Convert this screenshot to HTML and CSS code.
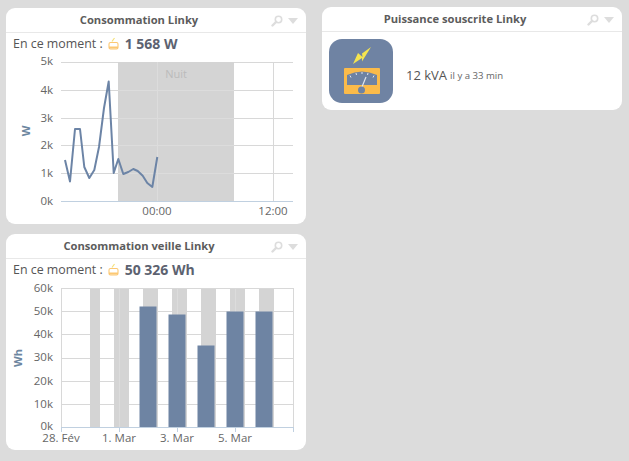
FILE: index.html
```html
<!DOCTYPE html>
<html lang="en">
<head>
  <meta charset="UTF-8" />
  <title>Linky</title>
  <link rel="stylesheet" href="styles.css">
</head>
<body>
  <div class="board">
    <div class="column column-left">
      <div class="card">
        <div class="card-head">
          <span class="card-title">Consommation Linky</span>
          <span class="card-tools">
            <svg width="12" height="12" viewBox="0 0 12 12"><circle cx="7.5" cy="4.5" r="3.2" fill="none" stroke="#ddd" stroke-width="1.6"/><path d="M5 7L1.5 10.5" stroke="#ddd" stroke-width="2.4" stroke-linecap="round"/></svg>
            <span class="caret"></span>
          </span>
        </div>
        <div class="now">
          <span>En ce moment :</span>
          <svg class="plug" width="11" height="13" viewBox="0 0 11 13"><path d="M6.5 1L4 4.5" stroke="#f6e27a" stroke-width="1.2"/><rect x="1" y="5.5" width="9" height="6.5" rx="1.5" fill="#fff" stroke="#fcc873" stroke-width="1.1"/><path d="M1 10.5h9" stroke="#fcc873" stroke-width="2"/></svg>
          <b>1 568 W</b>
        </div>
        <svg class="chart" width="300" height="170" viewBox="6 54 300 170">
          <g class="grid">
            <path d="M61 62.5H293M61 90.5H293M61 118.5H293M61 145.5H293M61 173.5H293"/>
            <path d="M157.5 62V201M273.5 62V201"/>
          </g>
          <rect class="band" x="118" y="62" width="116" height="139"/>
          <g class="grid-soft">
            <path d="M118 90.5H234M118 118.5H234M118 145.5H234M118 173.5H234M157.5 62V201"/>
          </g>
          <path class="axis" d="M61 201.5H293"/>
          <text class="band-label" x="176" y="78" text-anchor="middle">Nuit</text>
          <polyline class="line" points="65,160 70,181.5 75,129 80,129 84.3,167 89.3,178 94.3,170 99,147 104,108 108.7,81.5 113.7,173 118.3,159 123.3,174 128.3,172 133.3,169 137.7,171 142.7,175.7 147.3,183 152.3,187 157.3,157"/>
          <g class="ticks" text-anchor="end">
            <text x="53" y="65">5k</text>
            <text x="53" y="94">4k</text>
            <text x="53" y="122">3k</text>
            <text x="53" y="149">2k</text>
            <text x="53" y="177">1k</text>
            <text x="53" y="205">0k</text>
          </g>
          <g class="ticks" text-anchor="middle">
            <text x="157" y="215">00:00</text>
            <text x="273" y="215">12:00</text>
          </g>
          <text class="axis-title" transform="translate(29.5 131) rotate(-90)" text-anchor="middle">W</text>
        </svg>
      </div>

      <div class="card">
        <div class="card-head">
          <span class="card-title">Consommation veille Linky</span>
          <span class="card-tools">
            <svg width="12" height="12" viewBox="0 0 12 12"><circle cx="7.5" cy="4.5" r="3.2" fill="none" stroke="#ddd" stroke-width="1.6"/><path d="M5 7L1.5 10.5" stroke="#ddd" stroke-width="2.4" stroke-linecap="round"/></svg>
            <span class="caret"></span>
          </span>
        </div>
        <div class="now">
          <span>En ce moment :</span>
          <svg class="plug" width="11" height="13" viewBox="0 0 11 13"><path d="M6.5 1L4 4.5" stroke="#f6e27a" stroke-width="1.2"/><rect x="1" y="5.5" width="9" height="6.5" rx="1.5" fill="#fff" stroke="#fcc873" stroke-width="1.1"/><path d="M1 10.5h9" stroke="#fcc873" stroke-width="2"/></svg>
          <b>50 326 Wh</b>
        </div>
        <svg class="chart" width="300" height="170" viewBox="6 280 300 170">
          <g class="grid">
            <path d="M61 288.5H293M61 311.5H293M61 334.5H293M61 358.5H293M61 381.5H293M61 404.5H293"/>
            <path d="M61.5 288V427M119.5 288V427M177.5 288V427M235.5 288V427M293.5 288V427"/>
          </g>
          <g class="band">
            <rect x="90" y="289" width="10" height="138"/>
            <rect x="114" y="289" width="15" height="138"/>
            <rect x="143" y="289" width="15" height="138"/>
            <rect x="172" y="289" width="15" height="138"/>
            <rect x="201" y="289" width="15" height="138"/>
            <rect x="230" y="289" width="15" height="138"/>
            <rect x="259" y="289" width="15" height="138"/>
          </g>
          <g class="grid-soft">
            <path d="M119.5 289V427M177.5 289V427M235.5 289V427"/>
          </g>
          <g class="bars">
            <rect x="139.5" y="306.5" width="17" height="120.5"/>
            <rect x="168.5" y="314.5" width="17" height="112.5"/>
            <rect x="197.5" y="345.5" width="17" height="81.5"/>
            <rect x="226.5" y="311.5" width="17" height="115.5"/>
            <rect x="255.5" y="311.5" width="17" height="115.5"/>
          </g>
          <path class="axis" d="M61 427.5H293M61.5 427V432M119.5 427V432M177.5 427V432M235.5 427V432M293.5 427V432"/>
          <g class="ticks" text-anchor="end">
            <text x="53" y="292">60k</text>
            <text x="53" y="315">50k</text>
            <text x="53" y="338">40k</text>
            <text x="53" y="361">30k</text>
            <text x="53" y="385">20k</text>
            <text x="53" y="408">10k</text>
            <text x="53" y="430">0k</text>
          </g>
          <g class="ticks" text-anchor="middle">
            <text x="61" y="442">28. Fév</text>
            <text x="119" y="442">1. Mar</text>
            <text x="177" y="442">3. Mar</text>
            <text x="235" y="442">5. Mar</text>
          </g>
          <text class="axis-title" transform="translate(22 358) rotate(-90)" text-anchor="middle">Wh</text>
        </svg>
      </div>
    </div>

    <div class="column">
      <div class="card">
        <div class="card-head">
          <span class="card-title">Puissance souscrite Linky</span>
          <span class="card-tools">
            <svg width="12" height="12" viewBox="0 0 12 12"><circle cx="7.5" cy="4.5" r="3.2" fill="none" stroke="#ddd" stroke-width="1.6"/><path d="M5 7L1.5 10.5" stroke="#ddd" stroke-width="2.4" stroke-linecap="round"/></svg>
            <span class="caret"></span>
          </span>
        </div>
        <div class="info">
          <svg class="meter" width="64" height="64" viewBox="0 0 64 64">
            <rect width="64" height="64" rx="13" fill="#6f83a3"/>
            <path d="M42 8L33 14.5L33.5 18L29 14L24 25L33 19L33 22.5Z" fill="#f5e44f"/>
            <rect x="15" y="29" width="36" height="26" rx="1" fill="#fbbb4a"/>
            <path d="M18 46V36Q33 29 48 36V46Z" fill="#6f83a3"/>
            <path d="M21 36.5l1 2M27 34l.5 2M39 34l-.5 2M45 36.5l-1 2M33 33v2" stroke="#dfe5ee" stroke-width="1"/>
            <path d="M37 38L32.5 49" stroke="#dfe5ee" stroke-width="1.2"/>
            <circle cx="32.5" cy="51" r="3.5" fill="#6f83a3"/>
          </svg>
          <span class="value">12 kVA</span>
          <span class="since">il y a 33 min</span>
        </div>
      </div>
    </div>
  </div>
</body>
</html>
```

FILE: styles.css
```css
* {
  margin: 0;
  padding: 0;
  box-sizing: border-box;
}

body {
  background: #dcdcdc;
  font-family: "Open Sans", "DejaVu Sans", sans-serif;
  color: #555;
}

.board {
  display: flex;
  gap: 16px;
  padding: 7px 6px 0;
}

.column {
  width: 300px;
  display: flex;
  flex-direction: column;
  gap: 10px;
}

.column-left {
  margin-top: 1px;
}

.card {
  background: #fff;
  border-radius: 9px;
  overflow: hidden;
}

.card-head {
  position: relative;
  height: 25px;
  padding-right: 34px;
  border-bottom: 1px solid #e8e8e8;
  text-align: center;
  line-height: 21px;
}

.card-title {
  font-size: 11.2px;
  font-weight: bold;
  color: #5c5c5c;
}

.card-tools {
  position: absolute;
  top: 7px;
  right: 8px;
  display: flex;
  align-items: center;
  gap: 5px;
}

.caret {
  width: 0;
  height: 0;
  border-left: 5.5px solid transparent;
  border-right: 5.5px solid transparent;
  border-top: 6px solid #ddd;
}

.now {
  display: flex;
  align-items: center;
  height: 21px;
  padding-left: 7px;
  font-size: 12.4px;
}

.now .plug {
  margin-left: 5px;
}

.now b {
  margin-left: 6px;
  font-size: 14px;
  color: #5c6270;
}

.chart {
  display: block;
}

.grid path {
  fill: none;
  stroke: #d8d8d8;
  stroke-width: 1;
}

.grid-soft path {
  fill: none;
  stroke: #dcdcdc;
  stroke-width: 1;
}

.band,
.band rect {
  fill: #d4d4d4;
}

.band-label {
  font-size: 11px;
  fill: #bbb;
}

.axis {
  fill: none;
  stroke: #c0d0e0;
  stroke-width: 1;
}

.line {
  fill: none;
  stroke: #6c84a6;
  stroke-width: 2;
  stroke-linejoin: round;
}

.bars rect {
  fill: #6e84a3;
}

.ticks text {
  font-size: 11.5px;
  fill: #666;
}

.axis-title {
  font-size: 11px;
  font-weight: bold;
  fill: #6d869f;
}

.info {
  display: flex;
  align-items: center;
  height: 78px;
  padding-left: 7px;
}

.meter {
  flex: none;
}

.value {
  margin: 7px 0 0 13px;
  font-size: 13px;
  color: #555;
}

.since {
  margin: 9px 0 0 3px;
  font-size: 9.6px;
  color: #666;
}
```
